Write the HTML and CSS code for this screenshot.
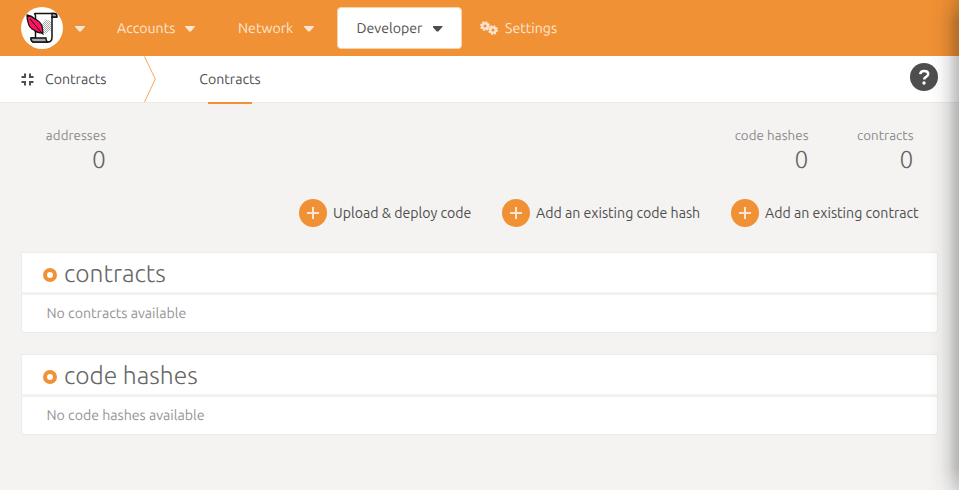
FILE: index.html
```html
<!DOCTYPE html>
<html lang="en">
<head>
<meta charset="utf-8">
<title>Contracts</title>
<link rel="stylesheet" href="styles.css">
</head>
<body>
<header class="topbar">
  <div class="brand">
    <svg class="logo" viewBox="0 0 42 42" width="42" height="42">
      <defs>
        <pattern id="dots" width="2" height="2" patternUnits="userSpaceOnUse"><path d="M0 0h1v1H0zM1 1h1v1H1z" fill="#444"/></pattern>
      </defs>
      <circle cx="21" cy="21" r="21" fill="#fff"/>
      <path d="M14 6.500h19q2.500 0 2.500 3.500H31v20q0 5-4 5H13q-3 0-3-4h4.500V10q0-3-1-3z" fill="#fff" stroke="#111" stroke-width="1.500" stroke-linejoin="round"/>
      <path d="M19 19l6-7 5 3v8l-6 4z" fill="url(#dots)" opacity=".45"/>
      <path d="M31 6.500h2.500q2.500 0 2.500 3.500h-5z" fill="#aaa" stroke="#111" stroke-width="1.400"/>
      <path d="M10 31h15q0 4 2.500 4H13q-3 0-3-4z" fill="#aaa" stroke="#111" stroke-width="1.400"/>
      <path d="M6 8q5 1 8 4 5 2 7 7l1 7q-6 0-9-3-5-2-6-8-1-3-1-7z" fill="#ff1465" stroke="#111" stroke-width="1.300" stroke-linejoin="round"/>
      <path d="M9 12l13.500 16" stroke="#111" stroke-width="1" fill="none"/>
    </svg>
    <i class="caret"></i>
  </div>
  <nav class="menu">
    <a class="item accounts"><span>Accounts</span><i class="caret"></i></a>
    <a class="item network"><span>Network</span><i class="caret"></i></a>
    <a class="item developer"><span>Developer</span><i class="caret"></i></a>
    <a class="item settings">
      <svg class="cogs" viewBox="0 0 18 14" width="18" height="14">
        <g fill="none" stroke="currentColor">
          <circle cx="5" cy="5" r="2.700" stroke-width="2.200"/>
          <circle cx="5" cy="5" r="4" stroke-width="1.800" stroke-dasharray="1.800 1.342"/>
          <circle cx="13" cy="9" r="2.700" stroke-width="2.200"/>
          <circle cx="13" cy="9" r="4" stroke-width="1.800" stroke-dasharray="1.800 1.342"/>
        </g>
      </svg>
      <span>Settings</span>
    </a>
  </nav>
</header>
<div class="tabs">
  <div class="section">
    <svg viewBox="0 0 13 13" width="13" height="13"><path d="M4 .5v3.500H.5M9 .5v3.500h3.500M4 12.500V9H.5M9 12.500V9h3.500" fill="none" stroke="#4e4e4e" stroke-width="2"/></svg>
    <span>Contracts</span>
  </div>
  <svg class="divider" viewBox="0 0 12 46" width="12" height="46"><path d="M.5 .5L11.300 23 .5 46" fill="none" stroke="#f19135" stroke-width=".8"/></svg>
  <a class="tab"><span>Contracts</span></a>
  <svg class="help" viewBox="0 0 28 28" width="28" height="28">
    <circle cx="14" cy="14" r="14" fill="#4e4e4e"/>
    <path d="M10.200 11.200Q10.600 8 14.200 8q4 0 4 3.100 0 1.800-2.100 2.800-1.900 1-1.900 2.500" fill="none" stroke="#fff" stroke-width="2.500"/>
    <circle cx="14" cy="20" r="1.700" fill="#fff"/>
  </svg>
</div>
<main>
  <div class="summary">
    <div class="stat addresses"><label>addresses</label><b>0</b></div>
    <div class="stat hashes"><label>code hashes</label><b>0</b></div>
    <div class="stat contracts"><label>contracts</label><b>0</b></div>
  </div>
  <div class="actions">
    <button class="upload"><i class="plus"></i><span>Upload &amp; deploy code</span></button>
    <button class="addhash"><i class="plus"></i><span>Add an existing code hash</span></button>
    <button class="addcontract"><i class="plus"></i><span>Add an existing contract</span></button>
  </div>
  <section class="table">
    <h1><i class="ring"></i><span>contracts</span></h1>
    <p><span>No contracts available</span></p>
  </section>
  <section class="table">
    <h1><i class="ring"></i><span>code hashes</span></h1>
    <p><span>No code hashes available</span></p>
  </section>
</main>
<div class="edge-shadow"></div>
</body>
</html>
```
FILE: styles.css
```css
* { box-sizing: border-box; }
body { margin: 0; height: 490px; overflow: hidden; background: #f4f3f2; color: #4e4e4e; font: 14.150px/20px Ubuntu, "Noto Sans", sans-serif; text-rendering: geometricPrecision; }
span, label { white-space: nowrap; }
.topbar { display: flex; align-items: center; height: 56px; padding-left: 21px; background: #f19135; color: #fce6d2; }
.brand { display: flex; align-items: center; width: 77px; }
.logo { margin-right: 12px; }
.caret { flex: none; width: 10px; height: 6px; margin-top: 1px; background: currentColor; clip-path: polygon(0 0, 100% 0, 100% 20%, 58% 100%, 42% 100%, 0 20%); }
.menu { display: flex; align-items: center; }
.item { display: flex; align-items: center; height: 42px; padding: 0 19px; }
.accounts { width: 121px; }
.accounts span { width: 68px; }
.network { width: 118px; }
.network span { width: 66px; }
.developer { width: 125px; padding: 0 18.500px; border: 1px solid #f9d3ae; border-radius: 4px; background: #fff; color: #4e4e4e; }
.developer span { width: 76px; }
.settings { padding-left: 18px; }
.cogs { margin-right: 7px; }
.tabs { display: flex; height: 47px; background: #fff; border-bottom: 1px solid #eceaea; }
.section { display: flex; align-items: center; width: 144px; padding-left: 21px; }
.section svg { margin-right: 11px; }
.tab { display: flex; align-items: center; justify-content: center; width: 44px; height: 48px; margin-left: 52px; border-bottom: 2px solid #f19135; }
.help { margin: 7px 21px 0 auto; }
.summary { display: flex; height: 96px; padding: 23px 45.500px 0 45px; }
.stat { display: flex; flex-direction: column; align-items: flex-end; color: #8b8a8a; font-size: 13.300px; line-height: 20px; letter-spacing: .08px; }
.stat b { margin-top: -1px; font: 300 24.500px/28px Ubuntu, "Open Sans", sans-serif; color: #666; }
.addresses { width: 61px; margin-right: auto; }
.hashes { width: 74px; margin-right: 48px; }
.contracts { width: 57px; }
.actions { display: flex; justify-content: flex-end; padding-right: 40px; }
button { display: flex; align-items: center; height: 28px; padding: 0; border: 0; background: none; color: inherit; font: inherit; }
.plus { width: 28px; height: 28px; margin-right: 6px; border-radius: 50%; background: linear-gradient(#fce6d2, #fce6d2) center / 12px 2px no-repeat, linear-gradient(#fce6d2, #fce6d2) center / 2px 12px no-repeat, #f19135; }
.upload { width: 203px; }
.addhash { width: 229px; }
.addcontract { width: 188px; }
.table { margin: 25px 21px 21px; }
.table + .table { margin-top: 0; }
h1, p { display: flex; align-items: center; margin: 0; background: #fff; border: 1px solid #eeecea; }
h1 { height: 41px; padding-left: 21px; border-bottom-color: #f4f3f2; font: 300 24.600px/30px Ubuntu, "Open Sans", sans-serif; color: #666; }
h1 span { padding-top: 1px; }
p { height: 40px; padding: 0 0 1px 24.500px; border-top: 2px solid #f2f1f0; border-radius: 0 0 4px 4px; color: #949494; }
.ring { width: 14px; height: 14px; margin: 4px 7px 0 0; border: 4px solid #f19135; border-radius: 50%; }
.edge-shadow { position: absolute; right: 0; top: 0; width: 30px; height: 490px; background: linear-gradient(to left, rgba(0, 0, 0, .25), rgba(0, 0, 0, .19) 17%, rgba(0, 0, 0, .1) 35%, rgba(0, 0, 0, .035) 60%, transparent); -webkit-mask: linear-gradient(rgba(0, 0, 0, .5), #000 22px, #000 468px, rgba(0, 0, 0, .5)); mask: linear-gradient(rgba(0, 0, 0, .5), #000 22px, #000 468px, rgba(0, 0, 0, .5)); }
```
